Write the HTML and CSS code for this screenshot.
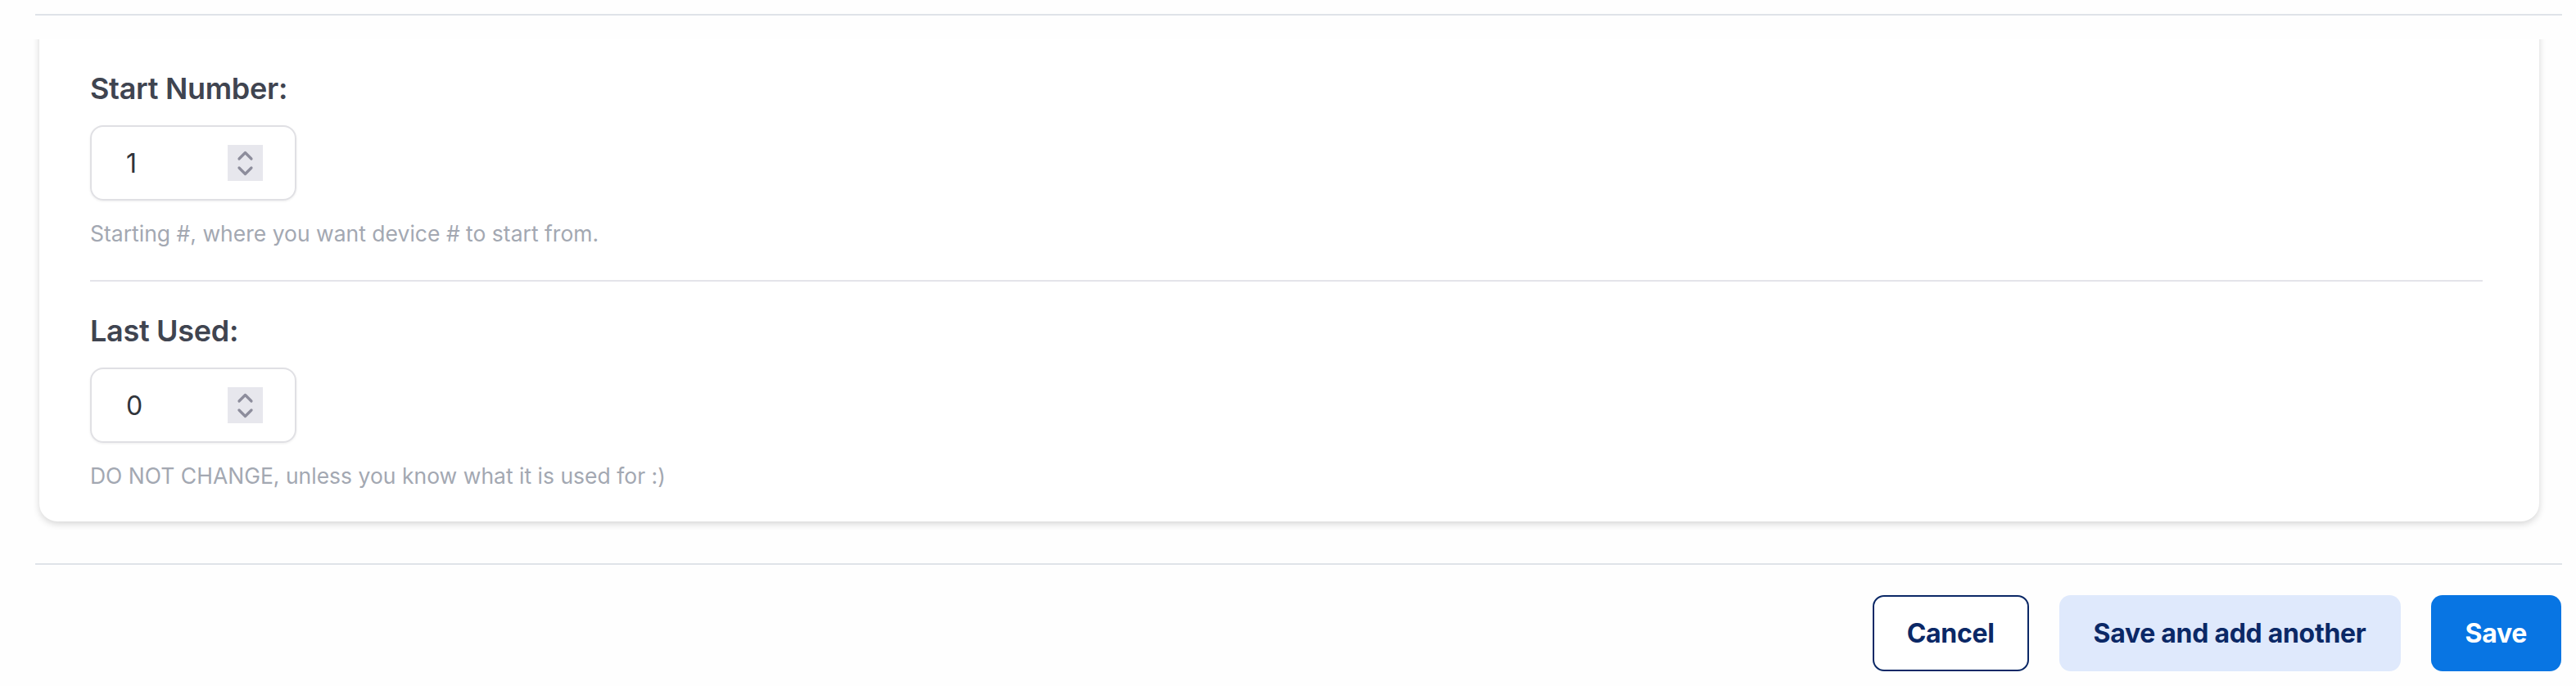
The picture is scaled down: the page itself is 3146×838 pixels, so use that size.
FILE: index.html
```html
<!DOCTYPE html>
<html lang="en">
<head>
<meta charset="utf-8">
<title>Device numbering</title>
<link rel="stylesheet" href="styles.css">
</head>
<body>
  <div class="rule rule-top"></div>
  <div class="scroll">
    <section class="card">
      <div class="field">
        <label class="field-label">Start Number:</label>
        <div class="num-input">
          <span class="value">1</span>
          <span class="spinner">
            <svg viewBox="0 0 43 44" width="43" height="44"><polyline points="14,17 21.5,9.5 29,17"/><polyline points="14,28 21.5,35.5 29,28"/></svg>
          </span>
        </div>
        <p class="help">Starting #, where you want device # to start from.</p>
      </div>
      <div class="divider"></div>
      <div class="field">
        <label class="field-label">Last Used:</label>
        <div class="num-input">
          <span class="value">0</span>
          <span class="spinner">
            <svg viewBox="0 0 43 44" width="43" height="44"><polyline points="14,17 21.5,9.5 29,17"/><polyline points="14,28 21.5,35.5 29,28"/></svg>
          </span>
        </div>
        <p class="help">DO NOT CHANGE, unless you know what it is used for :)</p>
      </div>
    </section>
  </div>
  <div class="rule rule-bottom"></div>
  <div class="actions">
    <button class="btn btn-outline">Cancel</button>
    <button class="btn btn-soft">Save and add another</button>
    <button class="btn btn-primary">Save</button>
  </div>
</body>
</html>
```
FILE: styles.css
```css
html, body {
  margin: 0;
  padding: 0;
  background: #fefefe;
  font-family: Inter, "Noto Sans", "Liberation Sans", sans-serif;
}

.rule {
  height: 2px;
  background: #dfe3e8;
  margin: 0 17px 0 43px;
}

.rule-top {
  margin-top: 17px;
}

.scroll {
  margin-top: 29px;
  overflow: hidden;
  padding: 0 45px 12px 48px;
}

.card {
  margin-top: -40px;
  padding: 78px 62px 39px;
  background: #ffffff;
  border-radius: 22px;
  box-shadow: 0 3px 9px rgba(0, 0, 0, 0.16);
}

.field-label {
  display: block;
  font-size: 36px;
  line-height: 44px;
  font-weight: 600;
  color: #3f4450;
  letter-spacing: -0.3px;
  margin-bottom: 23px;
}

.num-input {
  box-sizing: border-box;
  width: 252px;
  height: 92px;
  border: 2px solid #e0e0e4;
  border-radius: 16px;
  box-shadow: 0 1px 3px rgba(0, 0, 0, 0.07);
  display: flex;
  align-items: center;
  justify-content: space-between;
  padding: 0 39px 0 42px;
}

.value {
  font-size: 32px;
  color: #30343b;
}

.spinner {
  width: 43px;
  height: 44px;
  background: #e7e7ed;
  display: block;
}

.spinner svg {
  display: block;
  fill: none;
  stroke: #8d8d9c;
  stroke-width: 3.2;
  stroke-linecap: round;
  stroke-linejoin: round;
}

.help {
  margin: 23px 0 0;
  font-size: 26.5px;
  line-height: 34px;
  color: #a3a8b2;
}

.divider {
  height: 2px;
  background: #e4e4ea;
  margin: 40px 7px 38px 0;
}

.rule-bottom {
  margin-top: 39px;
}

.actions {
  display: flex;
  justify-content: flex-end;
  gap: 37px;
  margin-top: 37px;
  padding-right: 18px;
}

.btn {
  box-sizing: border-box;
  height: 93px;
  padding: 0 40px;
  border: 2px solid transparent;
  border-radius: 14px;
  font-family: inherit;
  font-size: 32px;
  font-weight: 700;
  letter-spacing: -0.3px;
  cursor: pointer;
}

.btn-outline {
  background: #ffffff;
  border-color: #0b2866;
  color: #0b2866;
}

.btn-soft {
  background: #dfe9fc;
  color: #0b2866;
}

.btn-primary {
  background: #0875e3;
  color: #ffffff;
}
```
